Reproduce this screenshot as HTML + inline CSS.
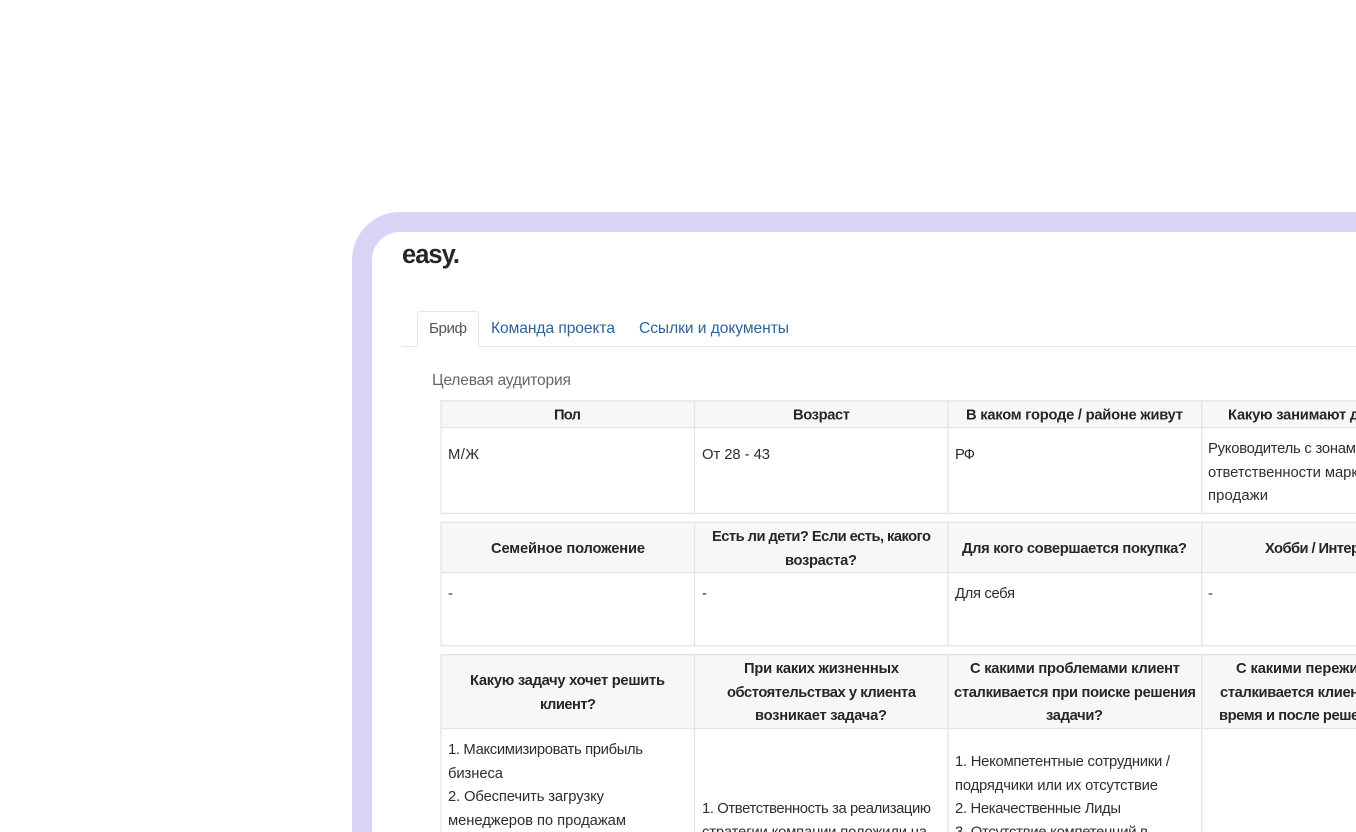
<!DOCTYPE html>
<html lang="ru">
<head>
<meta charset="utf-8">
<title>easy.</title>
<style>
html,body{margin:0;padding:0;width:1356px;height:832px;overflow:hidden;background:#fff}
svg{display:block;position:absolute;left:0;top:0;filter:blur(.3px)}
text{font-family:"Liberation Sans",sans-serif;font-size:14.8px;fill:#2e2e2e}
.b{font-weight:700;fill:#262626;font-size:14.7px}
.l{fill:#2f6299;font-size:15.6px}
.g{fill:#666;font-size:15.6px}
</style>
</head>
<body>
<svg width="1356" height="832" viewBox="0 0 1356 832" xmlns="http://www.w3.org/2000/svg">
<!-- Frame -->
<path d="M352 832V260a48 48 0 0 1 48-48H1356V232H400a28 28 0 0 0-28 28V832Z" fill="#d9d3f6"/>

<text x="402" y="263" textLength="58" lengthAdjust="spacing" style="font-size:25.5px;font-weight:700;fill:#262626">easy.</text>

<!-- Tabs -->
<rect x="402" y="346" width="954" height="1" fill="#e4e6e9"/>
<path d="M417.5 347V314a2.5 2.5 0 0 1 2.5-2.5h56a2.5 2.5 0 0 1 2.5 2.5v33" fill="#fff" stroke="#e4e6e9"/>
<rect x="418" y="345" width="60" height="3" fill="#fff"/>
<text x="429" y="333" textLength="38" lengthAdjust="spacing" style="font-size:15.2px;fill:#555">Бриф</text>
<text class="l" x="491" y="333" textLength="124" lengthAdjust="spacing">Команда проекта</text>
<text class="l" x="639" y="333" textLength="150" lengthAdjust="spacing">Ссылки и документы</text>
<text class="g" x="432" y="385" textLength="139" lengthAdjust="spacing">Целевая аудитория</text>

<!-- Header fills -->
<g fill="#f7f7f7">
<rect x="441" y="401" width="915" height="27"/>
<rect x="441" y="522" width="915" height="51"/>
<rect x="441" y="655" width="915" height="74"/>
</g>

<!-- Table lines -->
<g fill="#e5e5e5">
<rect x="441" y="400.2" width="915" height="1.4"/>
<rect x="441" y="426.8" width="915" height="1.4"/>
<rect x="441" y="512.8" width="915" height="1.4"/>
<rect x="441" y="521.6" width="915" height="1.4"/>
<rect x="441" y="571.8" width="915" height="1.4"/>
<rect x="441" y="645" width="915" height="1.4"/>
<rect x="441" y="654" width="915" height="1.4"/>
<rect x="441" y="727.8" width="915" height="1.4"/>
<rect x="440.4" y="400.2" width="1.4" height="114"/>
<rect x="693.8" y="400.2" width="1.4" height="114"/>
<rect x="947.4" y="400.2" width="1.4" height="114"/>
<rect x="1201" y="400.2" width="1.4" height="114"/>
<rect x="440.4" y="521.6" width="1.4" height="124.8"/>
<rect x="693.8" y="521.6" width="1.4" height="124.8"/>
<rect x="947.4" y="521.6" width="1.4" height="124.8"/>
<rect x="1201" y="521.6" width="1.4" height="124.8"/>
<rect x="440.4" y="654" width="1.4" height="178"/>
<rect x="693.8" y="654" width="1.4" height="178"/>
<rect x="947.4" y="654" width="1.4" height="178"/>
<rect x="1201" y="654" width="1.4" height="178"/>
</g>

<!-- Table 1 -->
<text class="b" x="554" y="419.5" textLength="27" lengthAdjust="spacing">Пол</text>
<text class="b" x="793" y="419.5" textLength="57" lengthAdjust="spacing">Возраст</text>
<text class="b" x="966" y="419.5" textLength="217" lengthAdjust="spacing">В каком городе / районе живут</text>
<text class="b" x="1228" y="419.5" textLength="200" lengthAdjust="spacing">Какую занимают должность</text>
<text x="448" y="459" textLength="31" lengthAdjust="spacing">М/Ж</text>
<text x="702" y="459" textLength="68" lengthAdjust="spacing">От 28 - 43</text>
<text x="955" y="459" textLength="20" lengthAdjust="spacing">РФ</text>
<text x="1208" y="453" textLength="156" lengthAdjust="spacing">Руководитель с зонами</text>
<text x="1208" y="477" textLength="186" lengthAdjust="spacing">ответственности маркетинг</text>
<text x="1208" y="500" textLength="60" lengthAdjust="spacing">продажи</text>

<!-- Table 2 -->
<text class="b" x="491" y="553" textLength="154" lengthAdjust="spacing">Семейное положение</text>
<text class="b" x="712" y="541" textLength="219" lengthAdjust="spacing">Есть ли дети? Если есть, какого</text>
<text class="b" x="785" y="565" textLength="72" lengthAdjust="spacing">возраста?</text>
<text class="b" x="962" y="553" textLength="225" lengthAdjust="spacing">Для кого совершается покупка?</text>
<text class="b" x="1265" y="553" textLength="122" lengthAdjust="spacing">Хобби / Интересы</text>
<text x="448" y="598">-</text>
<text x="702" y="598">-</text>
<text x="955" y="598" textLength="60" lengthAdjust="spacing">Для себя</text>
<text x="1208" y="598">-</text>

<!-- Table 3 -->
<text class="b" x="470" y="685" textLength="195" lengthAdjust="spacing">Какую задачу хочет решить</text>
<text class="b" x="540" y="709" textLength="56" lengthAdjust="spacing">клиент?</text>
<text class="b" x="744" y="673" textLength="155" lengthAdjust="spacing">При каких жизненных</text>
<text class="b" x="727" y="697" textLength="189" lengthAdjust="spacing">обстоятельствах у клиента</text>
<text class="b" x="755" y="720" textLength="132" lengthAdjust="spacing">возникает задача?</text>
<text class="b" x="970" y="673" textLength="210" lengthAdjust="spacing">С какими проблемами клиент</text>
<text class="b" x="954" y="697" textLength="242" lengthAdjust="spacing">сталкивается при поиске решения</text>
<text class="b" x="1046" y="720" textLength="57" lengthAdjust="spacing">задачи?</text>
<text class="b" x="1236" y="673" textLength="185" lengthAdjust="spacing">С какими переживаниями</text>
<text class="b" x="1220" y="697" textLength="192" lengthAdjust="spacing">сталкивается клиент до, во</text>
<text class="b" x="1219" y="720" textLength="225" lengthAdjust="spacing">время и после решения задачи?</text>

<text x="448" y="754" textLength="195" lengthAdjust="spacing">1. Максимизировать прибыль</text>
<text x="448" y="778" textLength="55" lengthAdjust="spacing">бизнеса</text>
<text x="448" y="801" textLength="156" lengthAdjust="spacing">2. Обеспечить загрузку</text>
<text x="448" y="825" textLength="178" lengthAdjust="spacing">менеджеров по продажам</text>

<text x="702" y="813" textLength="229" lengthAdjust="spacing">1. Ответственность за реализацию</text>
<text x="702" y="836.5" textLength="225" lengthAdjust="spacing">стратегии компании положили на</text>

<text x="955" y="766" textLength="215" lengthAdjust="spacing">1. Некомпетентные сотрудники /</text>
<text x="955" y="790" textLength="203" lengthAdjust="spacing">подрядчики или их отсутствие</text>
<text x="955" y="813" textLength="166" lengthAdjust="spacing">2. Некачественные Лиды</text>
<text x="955" y="836.5" textLength="193" lengthAdjust="spacing">3. Отсутствие компетенций в</text>
</svg>
</body>
</html>
